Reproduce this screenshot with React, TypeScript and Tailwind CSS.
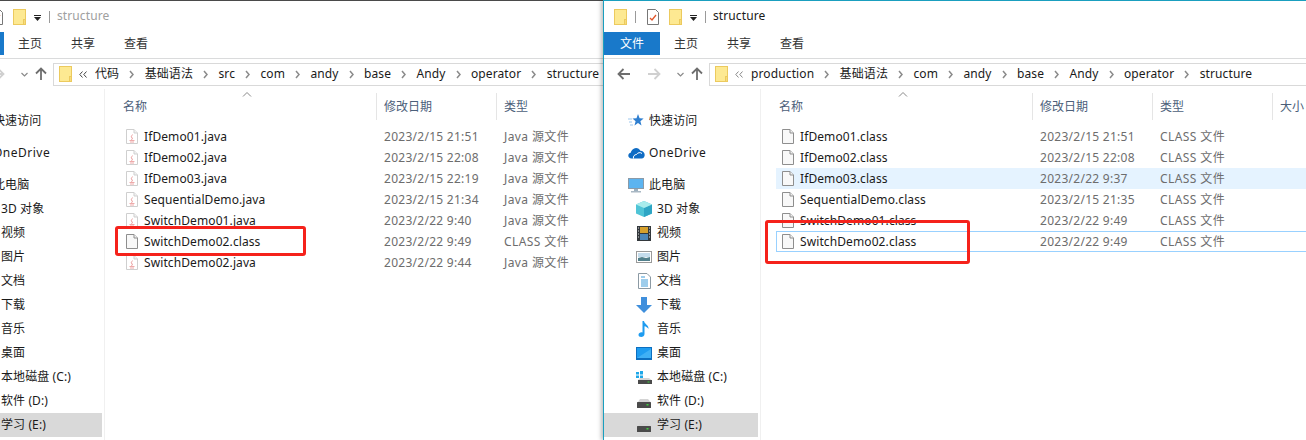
import React from "react";

const Folder = ({ className = "" }: { className?: string }) => (
  <svg width="13" height="16" viewBox="0 0 13 16" className={className}>
    <rect x="0.5" y="0.5" width="12" height="15" fill="#fde992" stroke="#ecca5e" />
    <rect x="10.5" y="10.5" width="2" height="5" fill="#f7dc7c" stroke="#ecca5e" />
  </svg>
);

const Doc = ({ java = false }: { java?: boolean }) => (
  <svg width="12" height="15" viewBox="0 0 12 15" className="shrink-0">
    <path d="M.5.5h7.500l3.500 3.500v10.500H.5z" fill={java ? "#fff" : "#f8f8f8"} stroke={java ? "#cfcfcf" : "#8e8e8e"} />
    <path d="M8 .5v3.500h3.500" fill="#f2f2f2" stroke={java ? "#cfcfcf" : "#8e8e8e"} />
    {java && <path d="M6.500 5.500 5 8l2 1.500-2 1M3.500 11.500h5M4 13h4" fill="none" stroke="#eeaaaa" strokeWidth="1" />}
  </svg>
);

const Chevron = () => (
  <svg width="5" height="9" viewBox="0 0 5 9" className="mx-[10.2px] shrink-0">
    <path d="M1 1l3 3.500L1 8" fill="none" stroke="#8a8a8a" strokeWidth="1.500" />
  </svg>
);

const icons: Record<string, React.ReactNode> = {
  star: (
    <svg width="16" height="16" viewBox="0 0 16 16">
      <path d="M10 1l1.600 4.200 4 .3-3.200 2.700 1.100 4.300L10 9.900l-3.500 2.600 1.100-4.300L4.500 5.500l4-.3z" fill="#2f7fd0" />
      <path d="M0 6h4M1 9h3M2 12h3" stroke="#9cc7ee" strokeWidth="1" />
    </svg>
  ),
  cloud: (
    <svg width="17" height="12" viewBox="0 0 17 12">
      <path d="M3.500 11.500C1.500 11.500.3 10.200.3 8.600c0-1.500 1-2.600 2.400-2.800C3.300 3.200 5.400 1 8 1c2 0 3.600 1.100 4.400 2.800 2.400 0 4.300 1.900 4.300 4.200 0 1.900-1.300 3.500-3 3.500z" fill="#0f6cc4" />
      <path d="M5.500 11.500c-.6-2.200 1-4 3-4 1-2 4-2.500 5.500-1" fill="none" stroke="#fff" strokeWidth="1" />
    </svg>
  ),
  pc: (
    <svg width="16" height="15" viewBox="0 0 16 15">
      <rect x="0.500" y="0.500" width="15" height="10" fill="#5cb4f0" stroke="#8a9aa8" />
      <rect x="6" y="11" width="4" height="2" fill="#9db0be" />
      <rect x="3" y="13" width="10" height="1.500" fill="#a9b8c4" />
    </svg>
  ),
  cube: (
    <svg width="16" height="16" viewBox="0 0 16 16">
      <path d="M8 0l8 3.500v9L8 16 0 12.500v-9z" fill="#4fc4d6" />
      <path d="M8 7l8-3.500v9L8 16z" fill="#2ea5c4" />
      <path d="M8 0l8 3.500L8 7 0 3.500z" fill="#a8ecec" />
    </svg>
  ),
  film: (
    <svg width="14" height="15" viewBox="0 0 14 15">
      <rect width="14" height="15" fill="#33383c" />
      <rect x="3" y="1" width="8" height="6" fill="#d6a02c" />
      <rect x="3" y="8" width="8" height="6" fill="#4c86b8" />
      <path d="M1 2h1M1 5h1M1 8h1M1 11h1M12 2h1M12 5h1M12 8h1M12 11h1" stroke="#e0e0e0" strokeWidth="1.200" />
    </svg>
  ),
  image: (
    <svg width="16" height="12" viewBox="0 0 16 12">
      <rect x="0.500" y="0.500" width="15" height="11" fill="#fff" stroke="#9a9a9a" />
      <rect x="2" y="2" width="12" height="4" fill="#c4dcec" />
      <path d="M2 10V7l4-1 4 1 4-1v4z" fill="#52808c" />
    </svg>
  ),
  doc: (
    <svg width="13" height="16" viewBox="0 0 13 16">
      <path d="M.5.5h8.500l3.500 3.500v11.500H.5z" fill="#fff" stroke="#8c9aa4" />
      <path d="M3 4h4M3 7h7M3 9h7M3 11h7M3 13h7" stroke="#3c9bd8" strokeWidth="1" />
    </svg>
  ),
  down: (
    <svg width="16" height="16" viewBox="0 0 16 16">
      <path d="M5 0h6v8h5l-8 8-8-8h5z" fill="#3f8fdc" />
    </svg>
  ),
  note: (
    <svg width="12" height="16" viewBox="0 0 12 16">
      <path d="M4.500 0H6c.3 3 5 4 4.500 8-.8-1.500-2.500-2.500-4-2.800V13c0 1.800-1.600 3-3.300 3C1.500 16 .5 15 .5 13.700c0-1.500 1.500-2.500 3-2.500.4 0 .7 0 1 .2z" fill="#1e9cf0" />
    </svg>
  ),
  desktop: (
    <svg width="16" height="13" viewBox="0 0 16 13">
      <rect width="16" height="13" fill="#0c6fc0" />
      <rect x="1" y="1" width="14" height="10" fill="#1e9cf0" />
      <path d="M1 11L15 2v9z" fill="#3fb0f5" />
    </svg>
  ),
  win: (
    <svg width="16" height="13" viewBox="0 0 16 13" className="mt-[1px]">
      <path d="M0 1h3v2.500H0zM4 0h3v3.500H4zM0 4.500h3V7H0zM4 4.500h3V8H4z" fill="#1ea7e8" />
      <path d="M2 9l2-2h9l2.500 2z" fill="#d4d4d4" />
      <rect x="2" y="9" width="14" height="4" fill="#4a4a4a" />
      <rect x="11.500" y="10.500" width="2" height="1" fill="#3ecf3e" />
    </svg>
  ),
  drive: (
    <svg width="16" height="9" viewBox="0 0 16 9" className="mt-[4px]">
      <path d="M2 3l2-3h8l2.500 3z" fill="#d4d4d4" />
      <rect x="1" y="3" width="14" height="6" rx="0.500" fill="#4a4a4a" />
      <rect x="10.500" y="5" width="2" height="1.500" fill="#3ecf3e" />
    </svg>
  ),
};

const sidebar: { label: string; icon: string; root?: boolean; gap?: boolean; active?: boolean; wide?: boolean }[] = [
  { label: "快速访问", icon: "star", root: true, gap: true },
  { label: "OneDrive", icon: "cloud", root: true, gap: true, wide: true },
  { label: "此电脑", icon: "pc", root: true },
  { label: "3D 对象", icon: "cube" },
  { label: "视频", icon: "film" },
  { label: "图片", icon: "image" },
  { label: "文档", icon: "doc" },
  { label: "下载", icon: "down" },
  { label: "音乐", icon: "note" },
  { label: "桌面", icon: "desktop" },
  { label: "本地磁盘 (C:)", icon: "win" },
  { label: "软件 (D:)", icon: "drive" },
  { label: "学习 (E:)", icon: "drive", active: true },
];

type Row = { name: string; date: string; type: string; java?: boolean; state?: "hover" | "focus" };

const leftRows: Row[] = [
  { name: "IfDemo01.java", date: "2023/2/15 21:51", type: "Java 源文件", java: true },
  { name: "IfDemo02.java", date: "2023/2/15 22:08", type: "Java 源文件", java: true },
  { name: "IfDemo03.java", date: "2023/2/15 22:19", type: "Java 源文件", java: true },
  { name: "SequentialDemo.java", date: "2023/2/15 21:34", type: "Java 源文件", java: true },
  { name: "SwitchDemo01.java", date: "2023/2/22 9:40", type: "Java 源文件", java: true },
  { name: "SwitchDemo02.class", date: "2023/2/22 9:49", type: "CLASS 文件" },
  { name: "SwitchDemo02.java", date: "2023/2/22 9:44", type: "Java 源文件", java: true },
];

const rightRows: Row[] = [
  { name: "IfDemo01.class", date: "2023/2/15 21:51", type: "CLASS 文件" },
  { name: "IfDemo02.class", date: "2023/2/15 22:08", type: "CLASS 文件" },
  { name: "IfDemo03.class", date: "2023/2/22 9:37", type: "CLASS 文件", state: "hover" },
  { name: "SequentialDemo.class", date: "2023/2/15 21:35", type: "CLASS 文件" },
  { name: "SwitchDemo01.class", date: "2023/2/22 9:49", type: "CLASS 文件" },
  { name: "SwitchDemo02.class", date: "2023/2/22 9:49", type: "CLASS 文件", state: "focus" },
];

const Explorer = ({ active, path, rows }: { active: boolean; path: string[]; rows: Row[] }) => (
  <div className="flex flex-col h-full w-full">
    {/* title bar */}
    <div className="h-[31px] shrink-0 flex items-center pl-[10px]">
      <Folder />
      <div className="w-px h-[12px] bg-[#9a9a9a] ml-[8px]" />
      <svg width="12" height="16" viewBox="0 0 12 16" className="ml-[11px] shrink-0">
        <path d="M.5.500h8l3 3v12H.5z" fill="#fff" stroke="#777" />
        <path d="M3 9l2 2 4-5" fill="none" stroke="#e2562a" strokeWidth="1.300" />
      </svg>
      <Folder className="ml-[10px]" />
      <svg width="7" height="6" viewBox="0 0 7 6" className="ml-[8px] mt-[2px] shrink-0">
        <path d="M0 0h7v1H0zM0 2h7L3.500 6z" fill="#222" />
      </svg>
      <div className="w-px h-[12px] bg-[#9a9a9a] ml-[8px]" />
      <span className={`ml-[7px] -mt-[2px] tracking-[0.1px] ${active ? "text-[#1a1a1a]" : "text-[#a0a0a0]"}`}>structure</span>
    </div>
    {/* ribbon tabs */}
    <div className="h-[27px] shrink-0 flex items-start border-b border-[#dadbdc]">
      <div className="w-[56px] h-[23px] bg-[#1979ca] text-white flex items-center justify-center shrink-0">文件</div>
      <div className="flex h-[23px] items-center pl-[14px] gap-[29px] text-[#333]">
        <span>主页</span>
        <span>共享</span>
        <span>查看</span>
      </div>
    </div>
    {/* nav bar */}
    <div className="h-[30px] shrink-0 flex items-center">
      <svg width="14" height="12" viewBox="0 0 14 12" className="ml-[13px] shrink-0">
        <path d="M13 6H2M6.500 1L1.500 6l5 5" fill="none" stroke="#6e6e6e" strokeWidth="1.800" />
      </svg>
      <svg width="14" height="12" viewBox="0 0 14 12" className="ml-[16px] shrink-0">
        <path d="M1 6h11M7.500 1l5 5-5 5" fill="none" stroke="#d0d0d0" strokeWidth="1.800" />
      </svg>
      <svg width="7" height="5" viewBox="0 0 7 5" className="ml-[16px] shrink-0">
        <path d="M.5 1l3 3 3-3" fill="none" stroke="#8a8a8a" strokeWidth="1.200" />
      </svg>
      <svg width="12" height="14" viewBox="0 0 12 14" className="ml-[7px] shrink-0">
        <path d="M6 13V2M1 6.500l5-5 5 5" fill="none" stroke="#6e6e6e" strokeWidth="1.800" />
      </svg>
      <div className="ml-[6px] flex-1 h-[23px] border-y border-l border-[#d9d9d9] flex items-center pl-[5px] text-[#1a1a1a] tracking-[0.12px] whitespace-nowrap overflow-hidden">
        <Folder className="shrink-0" />
        <svg width="8" height="7" viewBox="0 0 8 7" className="ml-[7px] mr-[8px] shrink-0">
          <path d="M3.500.5L.8 3.500l2.700 3M7.500.5L4.800 3.500l2.700 3" fill="none" stroke={active ? "#888" : "#444"} strokeWidth="1" />
        </svg>
        {path.map((p, i) => (
          <React.Fragment key={p}>
            {i > 0 && <Chevron />}
            <span>{p}</span>
          </React.Fragment>
        ))}
      </div>
    </div>
    {/* body */}
    <div className="flex-1 flex min-h-0">
      <div className="w-[157px] shrink-0 border-r border-[#f0f0f0] pt-[20px] pr-[2px]">
        {sidebar.map((s) => (
          <div
            key={s.label}
            className={`relative h-[24px] flex items-center whitespace-nowrap text-[#1a1a1a] ${s.wide ? "tracking-[0.5px]" : "tracking-[0.1px]"} ${s.root ? "pl-[45px]" : "pl-[53px]"} ${s.gap ? "mb-[8px]" : ""} ${s.active ? "bg-[#d9d9d9]" : ""}`}
          >
            <span className={`absolute top-0 h-[24px] w-[18px] flex items-center justify-center ${s.root ? "left-[23px]" : "left-[31px]"}`}>
              {icons[s.icon]}
            </span>
            {s.label}
          </div>
        ))}
      </div>
      <div className="flex-1 min-w-0 pt-[4px]">
        <div className="relative h-[27px] flex text-[#4c607a] whitespace-nowrap">
          <svg width="10" height="5" viewBox="0 0 10 5" className="absolute left-[137px] -top-[1px]">
            <path d="M1 4.500l4-4 4 4" fill="none" stroke="#888" strokeWidth="1" />
          </svg>
          <div className="w-[272px] pl-[18px] flex items-center border-r border-[#e5e5e5] shrink-0">名称</div>
          <div className="w-[120px] pl-[7px] flex items-center border-r border-[#e5e5e5] shrink-0">修改日期</div>
          <div className="w-[120px] pl-[7px] flex items-center border-r border-[#e5e5e5] shrink-0">类型</div>
          <div className="pl-[7px] flex items-center shrink-0">大小</div>
        </div>
        <div className="pt-[6px] pl-[15px]">
          {rows.map((r) => (
            <div
              key={r.name}
              className={`h-[21px] flex items-center whitespace-nowrap ${r.state === "hover" ? "bg-[#e5f3ff]" : ""} ${r.state === "focus" ? "border border-r-0 border-[#99d1ff]" : ""}`}
            >
              <div className={`shrink-0 flex items-center text-[#1a1a1a] tracking-[0.1px] ${r.state === "focus" ? "w-[263px] pl-[5px]" : "w-[264px] pl-[6px]"}`}>
                <Doc java={r.java} />
                <span className="ml-[6px]">{r.name}</span>
              </div>
              <div className="w-[120px] shrink-0 text-[#6d6d6d] tracking-[0.27px]">{r.date}</div>
              <div className="shrink-0 text-[#6d6d6d] tracking-[0.4px]">{r.type}</div>
            </div>
          ))}
        </div>
      </div>
    </div>
  </div>
);

export default function App() {
  return (
    <div className="relative w-[1306px] h-[440px] overflow-hidden flex bg-white font-['Noto_Sans','Noto_Sans_CJK_SC',sans-serif] text-[12px] leading-none">
      <div className="w-[603px] shrink-0 overflow-hidden border-t border-[#4a4a4a]">
        <div className="w-[655px] h-full -ml-[52px]">
          <Explorer
            active={false}
            rows={leftRows}
            path={["代码", "基础语法", "src", "com", "andy", "base", "Andy", "operator", "structure"]}
          />
        </div>
      </div>
      <div className="relative flex-1 min-w-0 border-t border-l border-[#1a9fbf] shadow-[-2px_0_4px_rgba(0,0,0,0.25)]">
        <Explorer
          active
          rows={rightRows}
          path={["production", "基础语法", "com", "andy", "base", "Andy", "operator", "structure"]}
        />
      </div>
      <div className="absolute left-[115px] top-[226px] w-[191px] h-[30px] border-[3px] border-[#f5221b] rounded-[3px]" />
      <div className="absolute left-[765px] top-[220px] w-[205px] h-[44px] border-[3px] border-[#f5221b] rounded-[3px]" />
    </div>
  );
}
